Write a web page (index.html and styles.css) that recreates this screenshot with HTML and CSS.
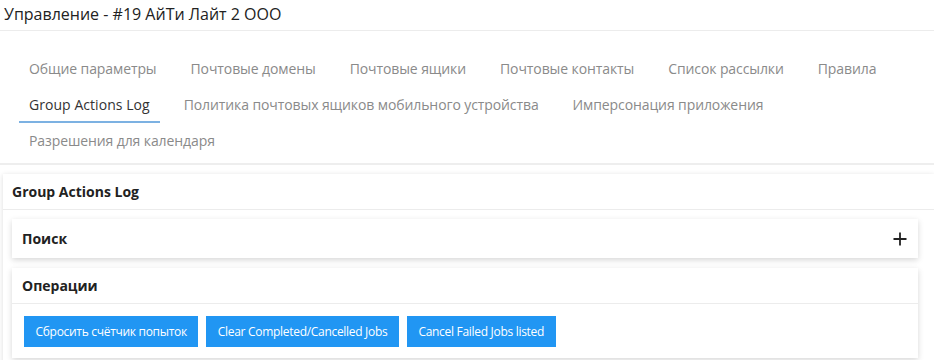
FILE: index.html
```html
<!DOCTYPE html>
<html lang="ru">
<head>
<meta charset="utf-8">
<title>Управление</title>
<link rel="stylesheet" href="styles.css">
</head>
<body>
<div class="page-title">Управление - #19 АйТи Лайт 2 ООО</div>
<nav class="tabs">
  <a class="tab">Общие параметры</a>
  <a class="tab">Почтовые домены</a>
  <a class="tab">Почтовые ящики</a>
  <a class="tab">Почтовые контакты</a>
  <a class="tab">Список рассылки</a>
  <a class="tab">Правила</a>
  <a class="tab active">Group Actions Log</a>
  <a class="tab">Политика почтовых ящиков мобильного устройства</a>
  <a class="tab">Имперсонация приложения</a>
  <a class="tab">Разрешения для календаря</a>
</nav>
<section class="card outer">
  <div class="card-header">Group Actions Log</div>
  <div class="outer-body">
    <div class="card inner search">
      <div class="inner-header">Поиск</div>
      <svg class="plus" width="14" height="14" viewBox="0 0 14 14"><path d="M7 0.5V13.5M0.5 7H13.5" stroke="#222" stroke-width="1.8" fill="none"/></svg>
    </div>
    <div class="card inner ops">
      <div class="inner-header bordered">Операции</div>
      <div class="ops-body">
        <button class="btn">Сбросить счётчик попыток</button>
        <button class="btn">Clear Completed/Cancelled Jobs</button>
        <button class="btn">Cancel Failed Jobs listed</button>
      </div>
    </div>
  </div>
</section>
</body>
</html>
```
FILE: styles.css
```css
html, body {
  margin: 0;
  padding: 0;
  background: #fff;
  font-family: "Open Sans", "Noto Sans", sans-serif;
  color: #333;
  overflow: hidden;
}
.page-title {
  height: 31px;
  box-sizing: border-box;
  padding: 2px 4px 0;
  font-size: 16px;
  line-height: 24px;
  color: #222;
  border-bottom: 1px solid #ececec;
}
.tabs {
  display: flex;
  flex-wrap: wrap;
  column-gap: 14px;
  padding: 20px 0 4px 19px;
  border-bottom: 2px solid #eeeeee;
}
.tab {
  display: block;
  padding: 0 10px;
  height: 36px;
  line-height: 36px;
  font-size: 14px;
  letter-spacing: -0.1px;
  color: #8a8a8a;
  white-space: nowrap;
  box-sizing: border-box;
}
.tab.active {
  color: #333;
  letter-spacing: 0.05px;
  border-bottom: 2px solid #7cb1e2;
  line-height: 35px;
}
.card {
  background: #fff;
  box-shadow: 0 1px 5px rgba(0, 0, 0, 0.14);
}
.outer {
  margin: 9px 0 0 3px;
}
.card-header {
  height: 36px;
  box-sizing: border-box;
  padding: 0 9px;
  line-height: 36px;
  font-size: 14px;
  font-weight: 700;
  color: #222;
  border-bottom: 1px solid #ececec;
}
.outer-body {
  display: flex;
  flex-direction: column;
  gap: 10px;
  padding: 9px 16px 10px 9px;
}
.inner {
  box-shadow: 0 2px 6px rgba(0, 0, 0, 0.16);
}
.search {
  display: flex;
  align-items: center;
  justify-content: space-between;
  height: 39px;
  padding-right: 11px;
}
.inner-header {
  padding: 0 10px;
  font-size: 14px;
  font-weight: 700;
  color: #222;
  line-height: 35px;
}
.inner-header.bordered {
  border-bottom: 1px solid #ececec;
}
.plus {
  display: block;
}
.ops-body {
  display: flex;
  gap: 8px;
  padding: 12px 12px 11px;
}
.btn {
  height: 31px;
  padding: 0 11.5px;
  border: 0;
  border-radius: 0;
  background: #2196f3;
  color: #fff;
  font-family: "Open Sans", sans-serif;
  font-size: 12px;
  letter-spacing: -0.3px;
  cursor: pointer;
}
```
